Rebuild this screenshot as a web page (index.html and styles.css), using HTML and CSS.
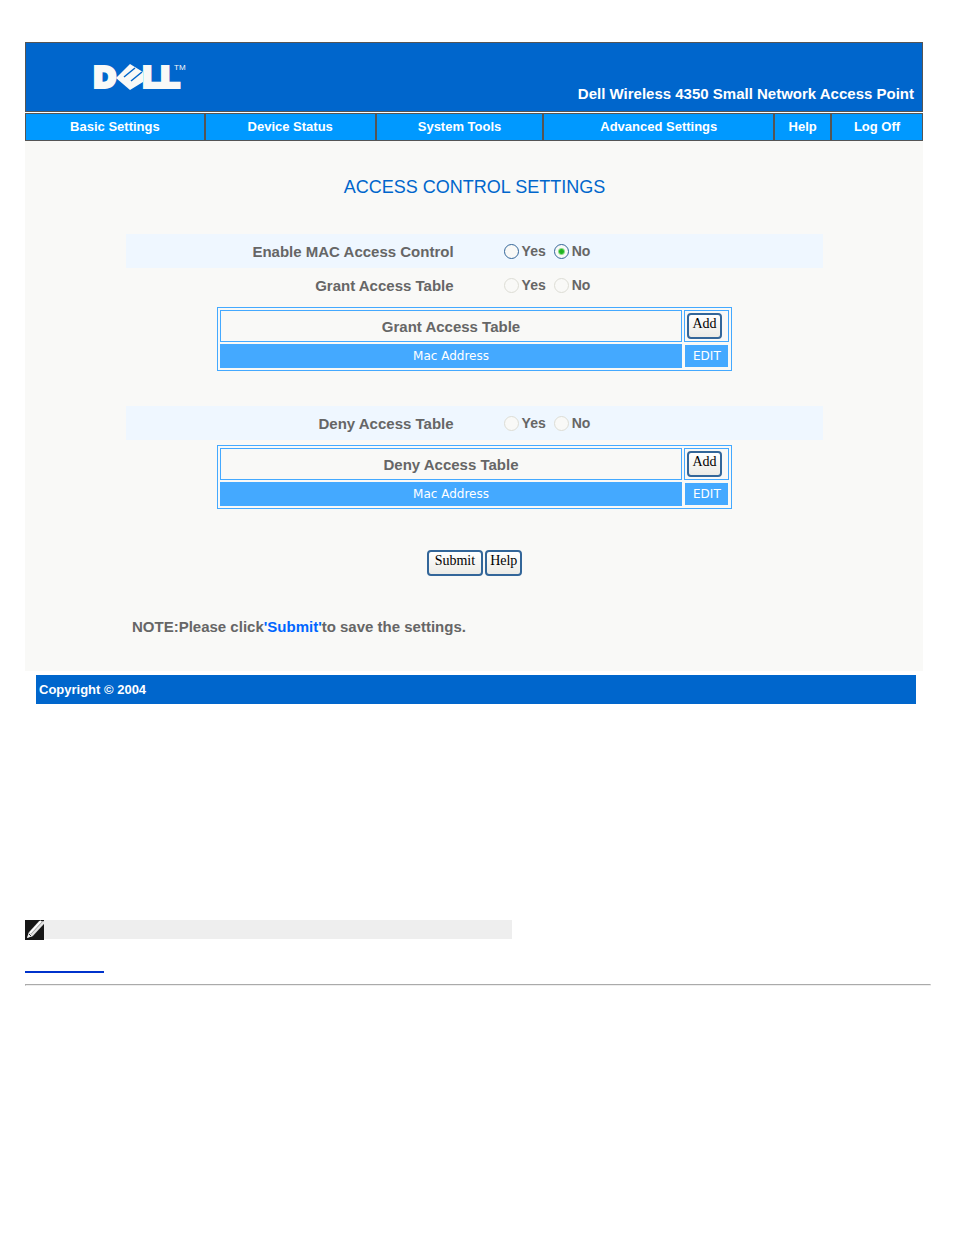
FILE: index.html
```html
<!DOCTYPE html>
<html lang="en">
<head>
    <meta charset="UTF-8">
    <meta name="viewport" content="width=device-width, initial-scale=1.0">
    <title>Access Control Settings</title>
    <link rel="stylesheet" href="styles.css">
</head>
<body>
    <div class="container">
        <header class="header">
            <svg class="logo" viewBox="0 0 94 28" role="img" aria-label="Dell">
                <g class="logo-letters">
                    <text x="1" y="24">D</text>
                    <text x="50" y="24">L</text>
                    <text x="68" y="24">L</text>
                </g>
                <path class="logo-e" d="M23 15 L37 1 L50 9 V19 L37 27 Z"/>
                <path class="logo-cut" d="M31 14 L42 5 M38 18 L49 9"/>
                <text class="logo-tm" x="81" y="7">TM</text>
            </svg>
            <p class="product">Dell Wireless 4350 Small Network Access Point</p>
        </header>
        <nav class="menu">
            <a href="#">Basic Settings</a>
            <a href="#">Device Status</a>
            <a href="#">System Tools</a>
            <a href="#">Advanced Settings</a>
            <a href="#">Help</a>
            <a href="#">Log Off</a>
        </nav>
        <main class="content">
            <h1>ACCESS CONTROL SETTINGS</h1>
            <form class="settings">
                <div class="row shaded" role="radiogroup" aria-labelledby="macLabel">
                    <span class="row-label" id="macLabel">Enable MAC Access Control</span>
                    <span class="options">
                        <label><input type="radio" name="mac">Yes</label>
                        <label><input type="radio" name="mac" checked>No</label>
                    </span>
                </div>
                <div class="row" role="radiogroup" aria-labelledby="grantLabel">
                    <span class="row-label" id="grantLabel">Grant Access Table</span>
                    <span class="options">
                        <label><input type="radio" name="grant" disabled>Yes</label>
                        <label><input type="radio" name="grant" disabled>No</label>
                    </span>
                </div>
                <table class="access">
                    <tr>
                        <th class="name">Grant Access Table</th>
                        <td class="action"><button type="button">Add</button></td>
                    </tr>
                    <tr class="columns">
                        <td>Mac Address</td>
                        <td class="edit">EDIT</td>
                    </tr>
                </table>
                <div class="row shaded second" role="radiogroup" aria-labelledby="denyLabel">
                    <span class="row-label" id="denyLabel">Deny Access Table</span>
                    <span class="options">
                        <label><input type="radio" name="deny" disabled>Yes</label>
                        <label><input type="radio" name="deny" disabled>No</label>
                    </span>
                </div>
                <table class="access">
                    <tr>
                        <th class="name">Deny Access Table</th>
                        <td class="action"><button type="button">Add</button></td>
                    </tr>
                    <tr class="columns">
                        <td>Mac Address</td>
                        <td class="edit">EDIT</td>
                    </tr>
                </table>
                <div class="buttons">
                    <button type="submit" class="submit">Submit</button>
                    <button type="button">Help</button>
                </div>
                <p class="note">NOTE:Please click<span>'Submit'</span>to save the settings.</p>
            </form>
        </main>
        <footer class="footer">Copyright © 2004</footer>
    </div>

    <div class="notice">
        <svg class="pencil" viewBox="0 0 19 20" aria-hidden="true">
            <rect width="19" height="20" fill="#161616"/>
            <path d="M2 18 L4 12 L14 1 H19 V4 L8 16 Z" fill="#999"/>
            <path d="M5 13 L16 1" stroke="#fff" stroke-width="2"/>
            <path d="M7 15 L19 2" stroke="#e4e4e4" stroke-width="2"/>
            <path d="M2 18 L4 12 L8 16 Z" fill="#eee"/>
            <path d="M4 14 L6 16" stroke="#333"/>
        </svg>
    </div>
    <a class="back" href="#" aria-label="Back to top"></a>
    <hr>
</body>
</html>
```

FILE: styles.css
```css
* {
    margin: 0;
    padding: 0;
    box-sizing: border-box;
}

body {
    font-family: "Liberation Sans", Arial, sans-serif;
    background-color: #fff;
    padding: 42px 23px 40px 25px;
}

.container {
    margin-right: 8px;
}

.header {
    display: flex;
    justify-content: space-between;
    height: 70px;
    padding: 20px 8px 8px 67px;
    background-color: #06c;
    border: 1px solid #555;
}

.logo {
    width: 94px;
    height: 28px;
    overflow: visible;
}

.logo-letters {
    font-size: 30px;
    font-weight: bold;
    fill: #f9f9f7;
    stroke: #f9f9f7;
    stroke-width: 4px;
}

.logo-e {
    fill: #f9f9f7;
}

.logo-cut {
    fill: none;
    stroke: #06c;
    stroke-width: 1.5px;
}

.logo-tm {
    font-size: 8px;
    fill: #f9f9f7;
}

.product {
    align-self: flex-end;
    color: #fff;
    font-size: 15px;
    font-weight: bold;
    line-height: 18px;
}

.menu {
    display: grid;
    grid-template-columns: 178fr 171fr 168fr 231fr 57fr 92fr;
    margin-top: 1px;
    border: 1px solid #555;
}

.menu a {
    color: #fff;
    background-color: #09f;
    font-size: 13px;
    font-weight: bold;
    line-height: 26px;
    text-align: center;
    text-decoration: none;
}

.menu a + a {
    border-left: 2px solid #555;
}

.content {
    padding: 36px 100px 34px 101px;
    background-color: #f9f9f7;
}

h1 {
    color: #06c;
    font-size: 18px;
    font-weight: normal;
    line-height: 20px;
    text-align: center;
}

.settings {
    margin-top: 37px;
    color: #666;
    font-size: 15px;
    font-weight: bold;
}

.row {
    display: flex;
    align-items: center;
    gap: 50px;
    height: 34px;
}

.shaded {
    background-color: #eff7ff;
}

.second {
    margin-top: 35px;
}

.row-label {
    width: 47%;
    text-align: right;
}

.options {
    display: flex;
    gap: 8px;
    font-size: 14px;
}

.options label {
    display: flex;
    align-items: center;
    gap: 3px;
}

input[type="radio"] {
    appearance: none;
    width: 15px;
    height: 15px;
    border: 1px solid #336699;
    border-radius: 50%;
    background-color: #f9f9f7;
}

input[type="radio"]:checked {
    background-image: radial-gradient(circle, #2a2 0, #2b2 2px, transparent 4px);
}

input[type="radio"]:disabled {
    border-color: #ddddd5;
}

.access {
    width: 74%;
    margin: 5px auto 0;
    border: 1px solid #44a9ff;
    border-spacing: 2px;
}

.name,
.action {
    height: 32px;
    border: 1px solid #44a9ff;
}

.action {
    width: 45px;
    padding: 0 2px;
}

.columns td {
    height: 24px;
    color: #fff;
    background-color: #44a9ff;
    font-family: "DejaVu Sans", Verdana, sans-serif;
    font-size: 12px;
    font-weight: normal;
    line-height: 14px;
    text-align: center;
}

.columns .edit {
    border: 1px solid #f9f9f7;
}

button {
    height: 26px;
    padding: 0 3px 4px;
    color: #000;
    background-image: linear-gradient(#fff, #ecebe6);
    border: 2px solid #369;
    border-radius: 4px;
    font-family: "Liberation Serif", "Times New Roman", serif;
    font-size: 14px;
    line-height: 16px;
}

.submit {
    padding: 0 6px 4px;
}

.buttons {
    display: flex;
    justify-content: center;
    gap: 2px;
    margin-top: 41px;
}

.note {
    margin: 41px 0 0 6px;
    line-height: 20px;
}

.note span {
    color: #06f;
}

.footer {
    margin: 4px 7px 0 11px;
    padding-left: 3px;
    color: #fff;
    background-color: #06c;
    font-size: 13px;
    font-weight: bold;
    line-height: 29px;
}

.notice {
    width: 487px;
    max-width: 100%;
    height: 19px;
    margin-top: 216px;
    background-color: #eee;
}

.pencil {
    display: block;
    width: 19px;
    height: 20px;
}

.back {
    display: block;
    width: 79px;
    height: 34px;
    border-bottom: 2px solid #03c;
}

hr {
    margin-top: 11px;
    border: 1px solid;
    border-color: #aaa #eee #eee #aaa;
}
```
